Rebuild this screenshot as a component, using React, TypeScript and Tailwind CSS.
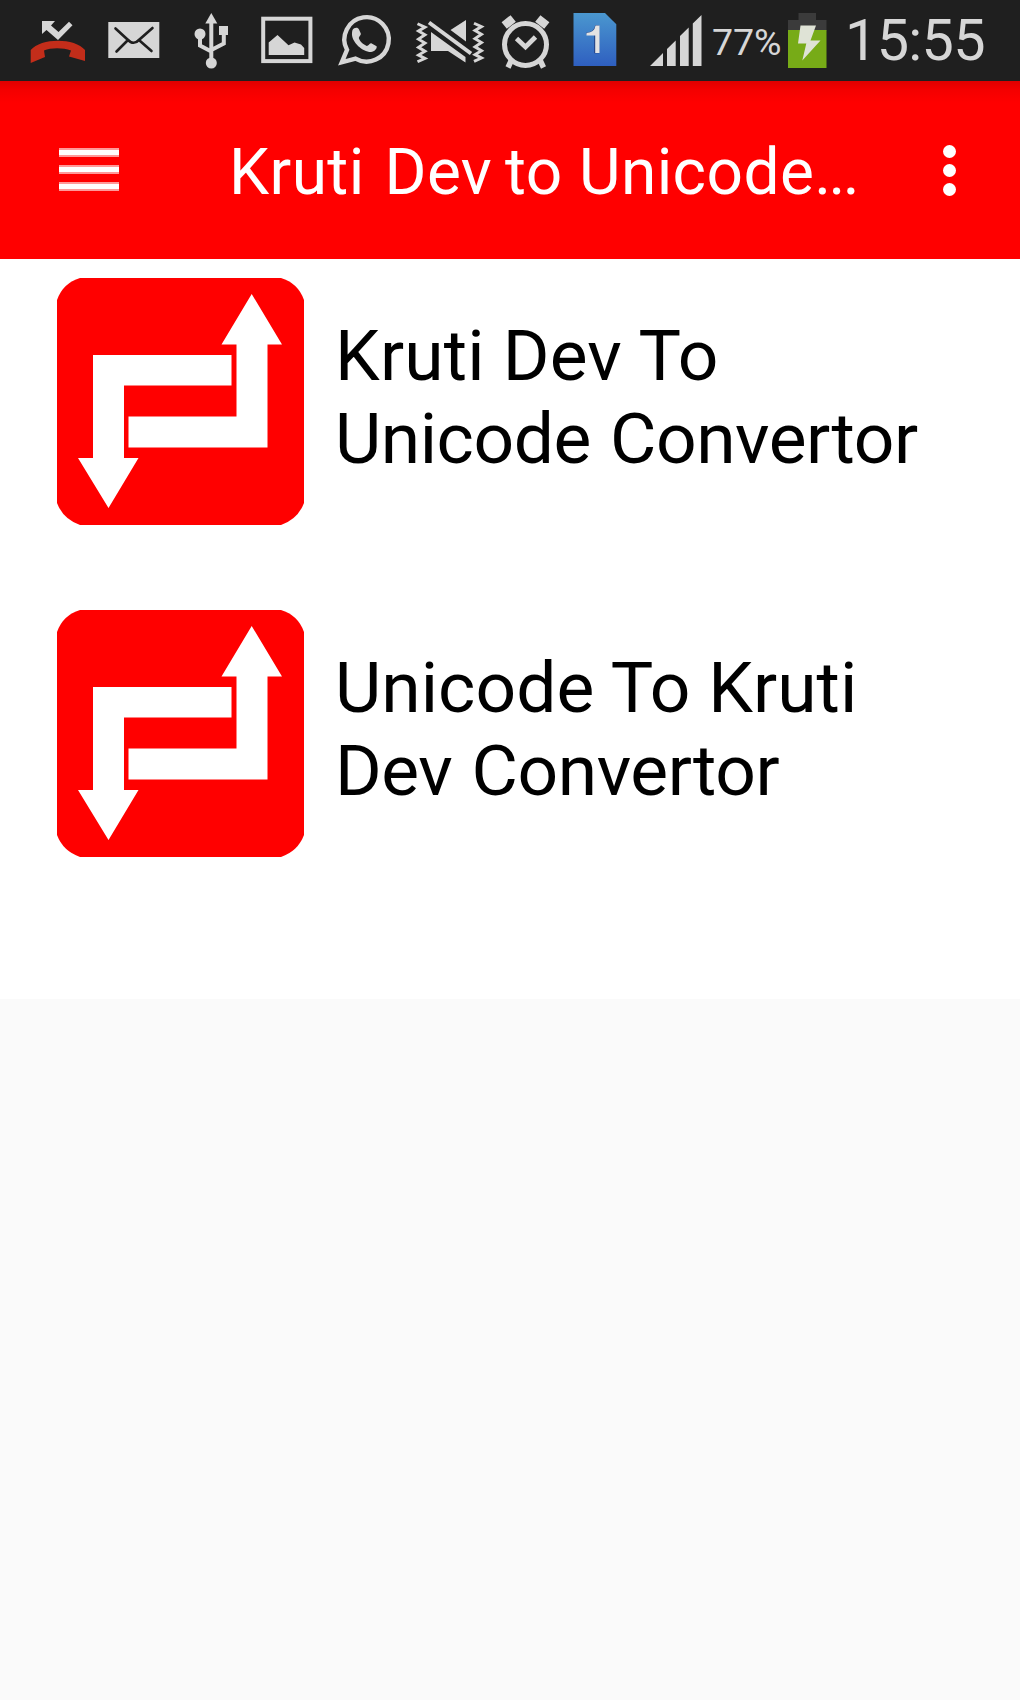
import React from 'react';

const G = '#d6d6d6';

function StatusIcons() {
  return (
    <svg className="block h-[80px] w-[710px] shrink-0" viewBox="0 0 710 80">
      <defs>
        <linearGradient id="sim" x1="0" y1="0" x2="0" y2="1">
          <stop offset="0" stopColor="#4a97cf" />
          <stop offset="1" stopColor="#2f5fc0" />
        </linearGradient>
      </defs>
      {/* missed call */}
      <path d="M42 21h13l-4 4.500 7.500 6.500L69 21.800l3.500 3.500L58 40 46.500 30l-4.500 4z" fill={G} />
      <path d="M30.700 50C41 37.500 75 37.500 85 50v11l-16-4.500 2-6c-8-3-20-3-27 0l1 6.500-14.300 6z" fill="#c32d1a" />
      {/* mail */}
      <rect x="108.300" y="22" width="51" height="36" fill={G} />
      <path d="M115.500 28.500L127.500 39.500Q133.500 46 139.500 39.500L152.500 28M127.500 40.500L116.500 51.500M139.500 40.500L151.500 51" stroke="#1f1f1f" strokeWidth="2.600" fill="none" strokeLinecap="round" />
      {/* usb */}
      <g fill={G}>
        <path d="M211.300 13l6 10.500h-12z" />
        <circle cx="200" cy="34" r="5.500" />
        <rect x="219" y="26" width="9" height="9" />
        <circle cx="211.300" cy="63" r="5.500" />
      </g>
      <path d="M211.300 20v42M200 34v11.500l11.300 6M223.800 33v10.500L211.300 50" stroke={G} strokeWidth="4" fill="none" />
      {/* picture */}
      <rect x="263.200" y="18.700" width="47.200" height="42.400" fill="none" stroke={G} strokeWidth="4" />
      <path d="M268.700 55V42.500l8.800-7.500 11 10.200 6-2.700 6.500 2 3.200 3.500v7z" fill={G} />
      {/* chat */}
      <path d="M341.800 62.300l5.200-12.500a22.200 22.200 0 1 1 8.500 8.800z" fill="none" stroke={G} strokeWidth="4.400" />
      <path d="M352.500 30c1.500-2.600 5.500-3 6.500-.5l1.800 4c.5 1.500-2 3-2 4.500 1 3.500 4.500 6.500 8 8 2 0 2.500-3.200 4.500-2.700l5.300 3c.8 2-2.200 5.700-5.600 5.700-9 0-18.500-10-19-17 0-2 0-3.500.5-5z" fill={G} />
      {/* muted with vibration */}
      <path d="M417.500 23l7.500 3.500-6.500 4 6.500 4-6.500 4.500 6.500 4-6.500 4.500 6.500 4-6.500 4 6.500 3.500-7.500 3.500" transform="translate(0 1.500) scale(1 .965)" fill="none" stroke={G} strokeWidth="3" />
      <path d="M474 22.500l7.500 3.500-6.500 4 6.500 4-6.500 4.500 6.500 4-6.500 4.500 6.500 4-6.500 4 6.500 3.500-7.500 3.500" transform="translate(0 1.500) scale(1 .965)" fill="none" stroke={G} strokeWidth="3" />
      <path d="M431 32l34.500 25v5.500L448 51h-17zM466 20v21.500L450.500 30z" fill={G} />
      <path d="M429 22.500l42 31" stroke={G} strokeWidth="4" />
      {/* alarm */}
      <circle cx="525.500" cy="44.500" r="21" fill="none" stroke={G} strokeWidth="5" />
      <path d="M516.500 38.500l9 8.500 10-10" fill="none" stroke={G} strokeWidth="4.800" />
      <path d="M504.200 25.500l9-7M546.800 25.500l-9-7" stroke={G} strokeWidth="8.500" />
      <path d="M511.500 60l-3.500 7.500M540 60l3.500 7.500" stroke={G} strokeWidth="5.500" />
      {/* sim */}
      <path d="M573.500 13h31.500l11.300 11.200V66h-42.800z" fill="url(#sim)" />
      <path d="M586.500 33.500q8-.5 9-7.500h4v28h-5V35h-8z" fill="#223f80" transform="translate(-.3 -.8)" />
      <path d="M586.500 33q8-.5 9-7.500h4v27.500h-4.300V35.500h-8.700z" fill="#e3e3e3" />
      {/* signal */}
      <path d="M650 66l13-13v13zM667 66V49l8.700-8.500V66zM680 66V36l8.700-8.500V66zM692.800 66V23.500l8.700-8.500V66z" fill={G} />
    </svg>
  );
}

function Battery() {
  return (
    <svg className="block h-[80px] w-[40px] shrink-0" viewBox="0 0 40 80">
      <path d="M0 20h10.500v-7H28v7h10.500v11H0z" fill="#3b3b3b" />
      <path d="M0 30h38.500v38H0z" fill="#77ab17" />
      <path d="M12.500 25.500h15.500l-5.500 15h10L14.300 60.500l4-17H10z" fill="#dfe3d6" />
    </svg>
  );
}

function ConvertIcon() {
  return (
    <svg className="block h-[247px] w-[247px] shrink-0" viewBox="0 0 247 247">
      <path d="M23 0H224Q241 5 247 22V225Q241 241 224 247H23Q6 241 0 225V22Q6 5 23 0Z" fill="#ff0000" />
      <path
        d="M36 77H174.500V107.500H67V180H81.500L51.500 230 21 180H36ZM194.700 16L225 66.500H210.500V169.500H71.500V138.500H179.500V66.500H164.500Z"
        fill="#fff"
      />
    </svg>
  );
}

function Item({ lines }: { lines: { text: string; cls: string }[] }) {
  return (
    <div className="flex h-[331px] items-start pl-[57px]">
      <ConvertIcon />
      <div className="ml-[31px] mt-[36px] text-[71.300px] leading-[83px] text-black">
        {lines.map((l) => (
          <div key={l.text} className={l.cls}>{l.text}</div>
        ))}
      </div>
    </div>
  );
}

export default function App() {
  return (
    <div className="flex h-[1700px] w-[1020px] flex-col overflow-hidden bg-[#fafafa] font-['Roboto',sans-serif] whitespace-nowrap">
      <div className="flex h-[81px] shrink-0 items-start bg-[#1f1f1f] text-[#d6d6d6]">
        <StatusIcons />
        <div className="w-[78px] pl-[2px] pt-[18px] text-[37.500px] leading-[48px] tracking-[-0.1px]">77%</div>
        <Battery />
        <div className="ml-[17px] pt-[5px] text-[57.600px] leading-[72px] tracking-[-0.7px]">15:55</div>
      </div>
      <div className="flex h-[178px] shrink-0 items-center bg-[linear-gradient(to_bottom,#e00000_0px,#f40000_9px,#ff0000_22px)] text-white">
        <div className="mb-[2px] ml-[59px] flex w-[60px] flex-col gap-[8px]">
          <div className="h-[9px] border-y-2 border-white/60 bg-white bg-clip-padding" />
          <div className="h-[9px] border-y-2 border-white/60 bg-white bg-clip-padding" />
          <div className="h-[9px] border-y-2 border-white/60 bg-white bg-clip-padding" />
        </div>
        <div className="ml-[110px] w-[714px] pt-[6px] text-[64px] leading-[76px] tracking-[0.400px]">
          Kruti<span className="tracking-[4px]"> </span>Dev<span className="tracking-[-3px]"> </span>to Unicode
          <span className="tracking-[-2.600px]">...</span>
        </div>
        <div className="flex flex-col gap-[6px]">
          <div className="size-[13px] rounded-full bg-white" />
          <div className="size-[13px] rounded-full bg-white" />
          <div className="size-[13px] rounded-full bg-white" />
        </div>
      </div>
      <div className="flex h-[740px] shrink-0 flex-col gap-px bg-white pt-[19px]">
        <Item
          lines={[
            { text: 'Kruti Dev To', cls: 'tracking-[0.200px]' },
            { text: 'Unicode Convertor', cls: 'tracking-[-0.450px] [word-spacing:2px]' },
          ]}
        />
        <Item
          lines={[
            { text: 'Unicode To Kruti', cls: 'tracking-[0.050px]' },
            { text: 'Dev Convertor', cls: 'tracking-[-0.450px] [word-spacing:2px]' },
          ]}
        />
      </div>
    </div>
  );
}
